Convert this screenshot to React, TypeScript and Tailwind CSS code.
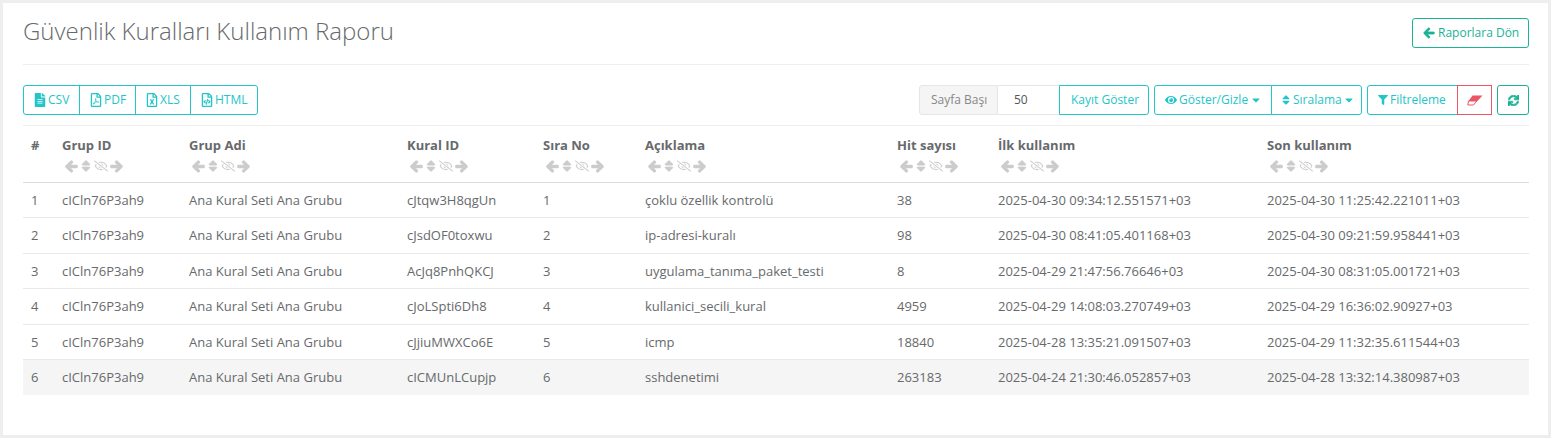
import React from "react";
import { FaArrowLeft, FaSort, FaRegEyeSlash, FaArrowRight, FaFileAlt, FaRegFilePdf, FaRegFileExcel, FaRegFileCode, FaEye, FaCaretDown, FaFilter, FaSync } from "react-icons/fa";

const cols = [
  ["#", "w-[31px]", false],
  ["Grup ID", "w-[127px]", true],
  ["Grup Adi", "w-[218px]", true],
  ["Kural ID", "w-[136px]", true],
  ["Sıra No", "w-[102px]", true],
  ["Açıklama", "w-[252px]", true],
  ["Hit sayısı", "w-[101px]", true],
  ["İlk kullanım", "w-[269px]", true],
  ["Son kullanım", "w-[270px]", true],
] as const;

const rows = [
  ["1", "cICln76P3ah9", "Ana Kural Seti Ana Grubu", "cJtqw3H8qgUn", "1", "çoklu özellik kontrolü", "38", "2025-04-30 09:34:12.551571+03", "2025-04-30 11:25:42.221011+03"],
  ["2", "cICln76P3ah9", "Ana Kural Seti Ana Grubu", "cJsdOF0toxwu", "2", "ip-adresi-kuralı", "98", "2025-04-30 08:41:05.401168+03", "2025-04-30 09:21:59.958441+03"],
  ["3", "cICln76P3ah9", "Ana Kural Seti Ana Grubu", "AcJq8PnhQKCJ", "3", "uygulama_tanıma_paket_testi", "8", "2025-04-29 21:47:56.76646+03", "2025-04-30 08:31:05.001721+03"],
  ["4", "cICln76P3ah9", "Ana Kural Seti Ana Grubu", "cJoLSpti6Dh8", "4", "kullanici_secili_kural", "4959", "2025-04-29 14:08:03.270749+03", "2025-04-29 16:36:02.90927+03"],
  ["5", "cICln76P3ah9", "Ana Kural Seti Ana Grubu", "cJjiuMWXCo6E", "5", "icmp", "18840", "2025-04-28 13:35:21.091507+03", "2025-04-29 11:32:35.611544+03"],
  ["6", "cICln76P3ah9", "Ana Kural Seti Ana Grubu", "cICMUnLCupjp", "6", "sshdenetimi", "263183", "2025-04-24 21:30:46.052857+03", "2025-04-28 13:32:14.380987+03"],
];

function ColTools() {
  return (
    <div className="flex items-center pl-[3px] mt-[3px] h-[14px] text-[#cccccc]">
      <FaArrowLeft className="text-[13px] shrink-0" stroke="currentColor" strokeWidth={50} />
      <FaSort className="text-[14px] ml-[1px] shrink-0" stroke="currentColor" strokeWidth={20} />
      <FaRegEyeSlash className="text-[14px] ml-[1px] shrink-0" />
      <FaArrowRight className="text-[13px] ml-[2px] shrink-0" stroke="currentColor" strokeWidth={50} />
    </div>
  );
}

const btn = "flex items-center h-[30px] gap-[2px] text-[12px] text-[#23c6c8] bg-white border border-[#23c6c8]";
const fileIcon = "text-[14px] -mx-[1px] shrink-0";

export default function App() {
  return (
    <div className="h-[438px] w-[1551px] bg-[#eeeeee] p-[3px] font-['Open_Sans',sans-serif] text-[#676a6c] overflow-hidden">
      <div className="h-[432px] bg-white pl-[20px] pr-[19px] pt-[15px]">
        <div className="flex items-start justify-between h-[47px] border-b border-[#eeeeee]">
          <h1 className="text-[24px] font-light leading-[28px] mt-[-1px] text-[#676a6c]">Güvenlik Kuralları Kullanım Raporu</h1>
          <button className="flex items-center gap-[3px] h-[30px] w-[117px] pl-[10px] text-[12px] text-[#1ab394] border border-[#1ab394] rounded-[3px]">
            <FaArrowLeft className="text-[12px] shrink-0" stroke="currentColor" strokeWidth={40} /> Raporlara Dön
          </button>
        </div>

        <div className="flex items-center justify-between mt-[20px] h-[30px]">
          <div className="flex">
            <span className={`${btn} w-[57px] pl-[10px] rounded-l-[3px]`}><FaFileAlt className={fileIcon} />CSV</span>
            <span className={`${btn} w-[57px] pl-[10px] -ml-px`}><FaRegFilePdf className={fileIcon} />PDF</span>
            <span className={`${btn} w-[56px] pl-[10px] -ml-px`}><FaRegFileExcel className={fileIcon} />XLS</span>
            <span className={`${btn} w-[68px] pl-[10px] -ml-px rounded-r-[3px]`}><FaRegFileCode className={fileIcon} />HTML</span>
          </div>
          <div className="flex items-center">
            <div className="flex">
              <span className="flex items-center h-[30px] w-[79px] pl-[11px] text-[12px] text-[#888888] bg-[#f5f5f5] border border-[#e5e6e7] rounded-l-[3px]">Sayfa Başı</span>
              <span className="flex items-center h-[30px] w-[61px] pl-[16px] text-[12px] text-[#555555] bg-white border-y border-[#e5e6e7]">50</span>
              <span className={`${btn} w-[90px] pl-[11px] rounded-r-[3px]`}>Kayıt Göster</span>
            </div>
            <div className="flex ml-[5px]">
              <span className={`${btn} w-[118px] pl-[10px] rounded-l-[3px]`}><FaEye className="text-[12px] shrink-0" />Göster/Gizle<FaCaretDown className="text-[12px] shrink-0" /></span>
              <span className={`${btn} w-[91px] pl-[8px] -ml-px rounded-r-[3px] !gap-[1px]`}><FaSort className="text-[12px] shrink-0" />Sıralama<FaCaretDown className="text-[12px] shrink-0" /></span>
            </div>
            <div className="flex ml-[5px]">
              <span className={`${btn} w-[91px] pl-[10px] rounded-l-[3px]`}><FaFilter className="text-[10px] shrink-0" />Filtreleme</span>
              <span className="flex items-center justify-center h-[30px] w-[35px] -ml-px text-[#ed5565] border border-[#ed5565]">
                <svg width="16" height="11" viewBox="0 0 16 11" fill="none">
                  <path d="M5.5 0.5H15.5L10.5 6H1.5Z" fill="currentColor" />
                  <path d="M1.5 6H9.8L6.5 10H0.8Z" fill="white" stroke="currentColor" strokeWidth="1" />
                </svg>
              </span>
            </div>
            <span className="flex items-center justify-center h-[30px] w-[32px] ml-[5px] text-[#1ab394] border border-[#1ab394] rounded-[3px]"><FaSync className="text-[11px]" stroke="currentColor" strokeWidth={30} /></span>
          </div>
        </div>

        <table className="w-[1506px] table-fixed border-collapse mt-[10px] text-[13px] leading-[18.4px]">
          <thead>
            <tr className="border-t border-[#eeeeee] border-b border-b-[#dddddd]">
              {cols.map(([label, w, tools]) => (
                <th key={label} className={`${w} px-[8px] pt-[9px] pb-[9px] h-[57px] text-left align-top font-bold`}>
                  <div className="leading-[21px]">{label}</div>
                  {tools && <ColTools />}
                </th>
              ))}
            </tr>
          </thead>
          <tbody>
            {rows.map((r, i) => (
              <tr key={r[0]} className={`border-b ${i === 5 ? "bg-[#f5f5f5] border-[#f5f5f5]" : "border-[#e7eaec]"}`}>
                {r.map((c, j) => (
                  <td key={j} className="px-[8px] py-[8px] whitespace-nowrap">{c}</td>
                ))}
              </tr>
            ))}
          </tbody>
        </table>
      </div>
    </div>
  );
}
